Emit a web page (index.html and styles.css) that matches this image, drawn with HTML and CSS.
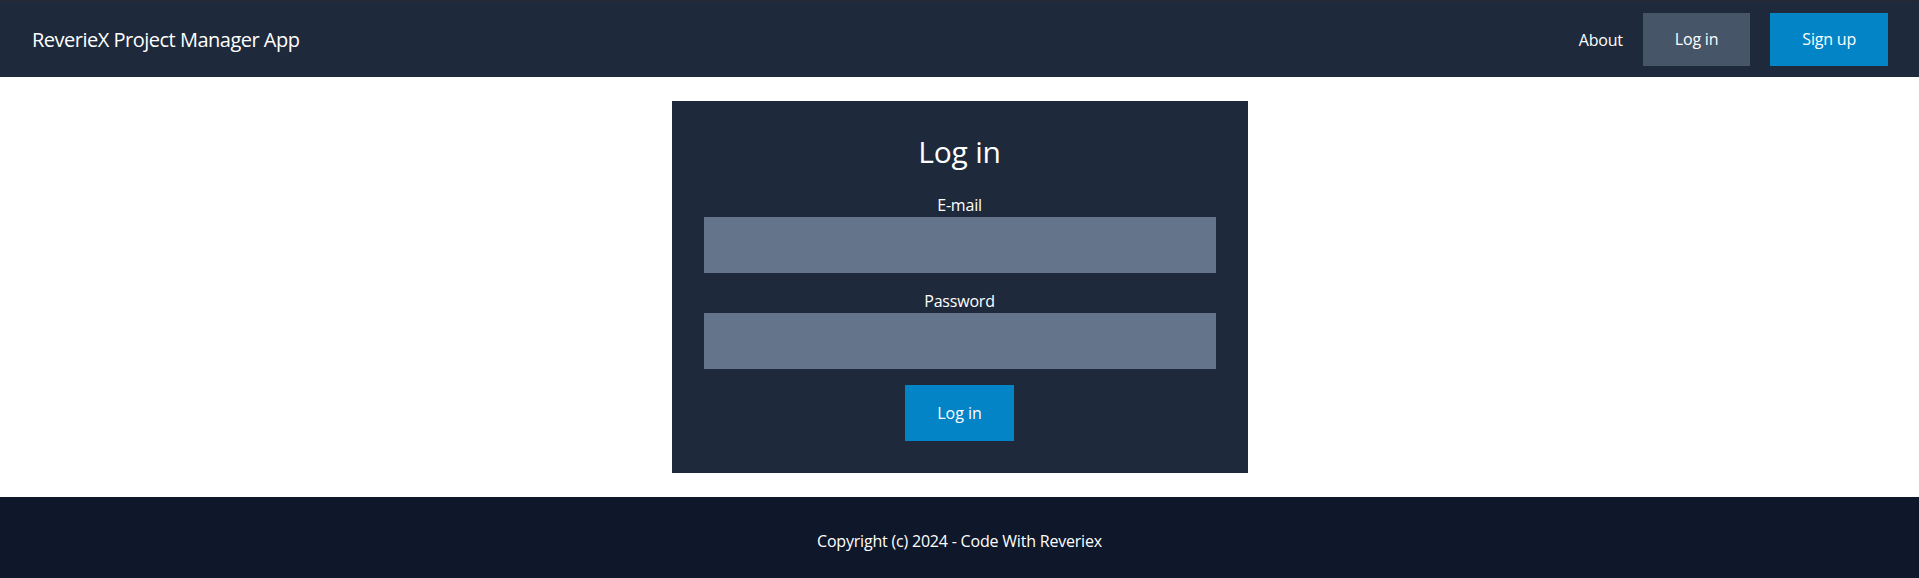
FILE: index.html
```html
<!DOCTYPE html>
<html lang="en">
<head>
<meta charset="utf-8">
<title>ReverieX Project Manager App</title>
<link rel="stylesheet" href="styles.css">
</head>
<body>
<header class="navbar">
  <a class="brand" href="#">ReverieX Project Manager App</a>
  <nav class="nav-links">
    <a class="nav-link" href="#">About</a>
    <a class="nav-btn nav-btn-login" href="#">Log in</a>
    <a class="nav-btn nav-btn-signup" href="#">Sign up</a>
  </nav>
</header>
<main class="main">
  <form class="card">
    <h1 class="card-title">Log in</h1>
    <label class="field-label" for="email">E-mail</label>
    <input class="field-input" id="email" type="email">
    <label class="field-label field-label-gap" for="password">Password</label>
    <input class="field-input" id="password" type="password">
    <button class="submit-btn" type="button">Log in</button>
  </form>
</main>
<footer class="footer">Copyright (c) 2024 - Code With Reveriex</footer>
</body>
</html>
```
FILE: styles.css
```css
* { box-sizing: border-box; }
html, body { margin: 0; padding: 0; }
body {
  font-family: "Open Sans", "Noto Sans", "Liberation Sans", sans-serif;
  font-size: 16px;
  line-height: 24px;
  letter-spacing: -0.2px;
  color: #ffffff;
  background: #ffffff;
}
a { color: inherit; text-decoration: none; }

.navbar {
  display: flex;
  align-items: center;
  justify-content: space-between;
  height: 77px;
  padding: 0 31px 0 32px;
  background: #1e293b;
  border-top: 1px solid #262a31;
}
.brand {
  font-size: 20px;
  line-height: 28px;
  letter-spacing: -0.5px;
  padding-top: 1px;
}
.nav-links {
  display: flex;
  align-items: center;
  gap: 20px;
  padding-top: 1px;
}
.nav-link { font-size: 16px; }
.nav-btn {
  display: block;
  padding: 14px 32px;
  line-height: 25px;
  font-size: 16px;
}
.nav-btn-login { background: #475569; }
.nav-btn-signup { background: #0284c7; }

.main {
  display: flex;
  justify-content: center;
  padding: 24px 0;
}
.card {
  width: 576px;
  padding: 32px;
  background: #1e293b;
  display: flex;
  flex-direction: column;
  align-items: center;
  margin: 0;
}
.card-title {
  margin: 0 0 23px;
  padding-top: 1px;
  font-size: 30px;
  line-height: 36px;
  font-weight: 400;
}
.field-label {
  display: block;
  font-size: 16px;
  line-height: 24px;
}
.field-label-gap { margin-top: 16px; }
.field-input {
  display: block;
  width: 512px;
  height: 56px;
  border: 0;
  padding: 0 16px;
  background: #64748b;
  color: #ffffff;
  font: inherit;
  outline: none;
}
.submit-btn {
  margin-top: 16px;
  padding: 16px 32px;
  border: 0;
  background: #0284c7;
  color: #ffffff;
  font: inherit;
  line-height: 24px;
  cursor: pointer;
}

.footer {
  background: #0f172a;
  text-align: center;
  padding: 32px 0;
  font-size: 16px;
  line-height: 24px;
}
```
